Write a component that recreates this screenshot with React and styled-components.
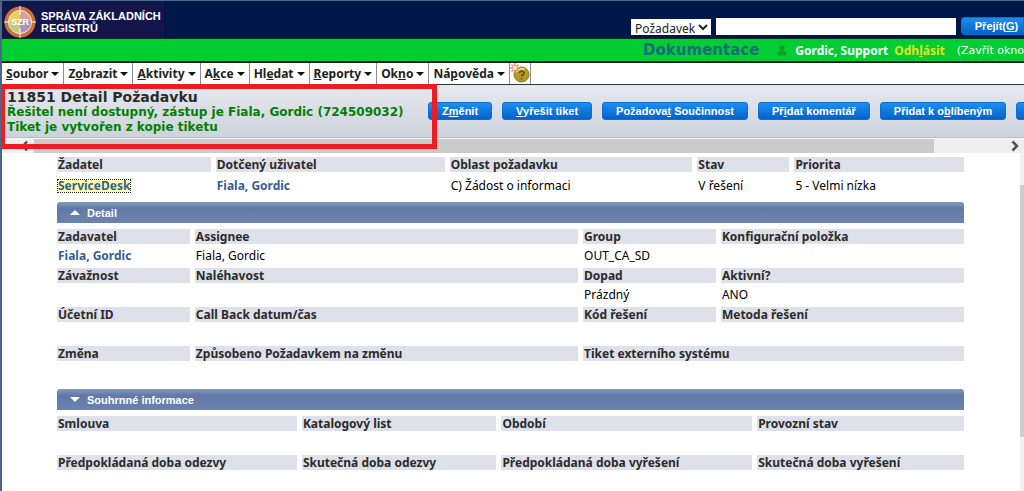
import React from 'react';
import styled, { createGlobalStyle, css } from 'styled-components';

const verdana = "'DejaVu Sans', Verdana, sans-serif";
const arial = "'Liberation Sans', Arial, sans-serif";
const tahoma = "'Noto Sans', Tahoma, sans-serif";

const GlobalStyle = createGlobalStyle`
  *, *::before, *::after {
    box-sizing: border-box;
  }

  html, body {
    margin: 0;
    background: #fff;
  }

  body {
    font-family: ${tahoma};
    font-size: 12px;
    color: #000;
    overflow: hidden;
  }
`;

const Page = styled.div`
  position: relative;
  min-height: 100vh;
  display: flex;
  flex-direction: column;
  border-left: 2px solid #4c6782;
  overflow: hidden;
`;

const TopBar = styled.header`
  display: flex;
  justify-content: space-between;
  height: 38px;
  border-top: 1px solid #4a6a92;
  background: #00174a;
`;

const Brand = styled.div`
  display: flex;
  align-items: center;
  gap: 5px;
  width: 162px;
  padding: 5px 0 0 2px;
  background: #14154a;
  color: #fff;
  font: bold 11px/12px ${arial};
  white-space: nowrap;
`;

const SearchForm = styled.form`
  display: flex;
  align-items: flex-end;
  gap: 5px;
  padding-bottom: 3px;
`;

const TypeSelect = styled.select`
  width: 80px;
  height: 16px;
  padding: 0;
  border: 0;
  background: #fff;
  color: #222;
  font: 12px ${tahoma};
`;

const SearchInput = styled.input`
  width: 240px;
  height: 17px;
  padding: 0 4px;
  border: 0;
  background: #fff;
  font: 12px ${tahoma};
`;

const BlueButton = styled.button`
  flex: none;
  min-width: 36px;
  height: 18px;
  padding: 0 13px;
  border: 1px solid #0a6fd0;
  border-radius: 3px;
  background: linear-gradient(#1c8ef0, #0562c8);
  color: #fff;
  font: bold 11px/14px ${arial};
  white-space: nowrap;
`;

const GoButton = styled(BlueButton)`
  width: 63px;
  padding: 0 4px 0 12px;
  border-radius: 3px 0 0 3px;
`;

const UserBar = styled.div`
  display: flex;
  align-items: center;
  justify-content: flex-end;
  height: 25px;
  border-top: 1px solid #04351c;
  border-bottom: 2px solid #06201c;
  background: #00ce33;
  color: #fff;
  font-weight: bold;
  white-space: nowrap;
`;

const DocsLink = styled.a`
  margin-right: 18px;
  color: #1c6c78;
  font-family: ${verdana};
  font-size: 15px;
  line-height: 20px;
  text-decoration: none;
`;

const UserName = styled.span`
  margin: 0 6px 0 8px;
`;

const LogoutLink = styled.a`
  color: #e8e020;
  text-decoration: none;
`;

const CloseLink = styled.a`
  margin-left: 12px;
  color: #fff;
  font-family: ${verdana};
  font-size: 11px;
  font-weight: normal;
  text-decoration: none;
`;

const MenuBar = styled.nav`
  display: flex;
  height: 22px;
  border-bottom: 1px solid #34343c;
  background: #fff;
`;

const MenuButton = styled.button`
  display: flex;
  align-items: center;
  justify-content: space-between;
  gap: 3px;
  padding: 0 4px;
  border: 0;
  border-right: 1px solid #8c8c94;
  background: #fff;
  color: #222;
  font: bold 12px ${tahoma};
  white-space: nowrap;

  &::after {
    content: '';
    border: 4px solid transparent;
    border-top-color: #111;
    border-bottom: 0;
  }
`;

const HelpButton = styled.button`
  width: 21px;
  padding: 0;
  border: 0;
  border-right: 1px solid #8c8c94;
  background: #fff;
`;

const TitleBar = styled.section`
  display: flex;
  height: 53px;
  border-bottom: 1px solid #b9bfca;
  background: linear-gradient(#e7e9ef, #cdd2dc);
  white-space: nowrap;
`;

const Titles = styled.div`
  flex: none;
  width: 426px;
  padding: 4px 0 0 5px;
  color: #008000;
  font-family: ${verdana};
  font-size: 12px;
  font-weight: bold;
  line-height: 15px;
`;

const Title = styled.h1`
  margin: 0;
  color: #2b2b2b;
  font-size: 14px;
  line-height: 16px;
`;

const Actions = styled.div`
  display: flex;
  gap: 10px;
  padding-top: 17px;
`;

const HorizontalScroll = styled.div`
  display: flex;
  align-items: center;
  height: 15px;
  padding: 0 4px 0 18px;
  border-top: 1px solid #f4f4f4;
  background: #efefef;
`;

const HorizontalThumb = styled.div`
  width: 90%;
  height: 14px;
  margin: 0 auto 0 4px;
  background: #cbcbcb;
`;

const Workspace = styled.div`
  flex: 1;
  display: flex;
  justify-content: space-between;
`;

const Content = styled.main`
  flex: 1;
  padding: 4px 56px 0 55px;
`;

const VerticalScroll = styled.div`
  width: 4px;
  padding-top: 32px;
  background: #f1f1f1;
`;

const VerticalThumb = styled.div`
  height: 252px;
  background: #cdcdcd;
`;

const FieldTable = styled.table`
  width: 100%;
  table-layout: fixed;
  border-collapse: collapse;
  line-height: 15px;
`;

const cell = css`
  padding: 0 5px 0 0;
  text-align: left;
  text-indent: 1px;
  white-space: nowrap;

  &:last-child {
    padding-right: 0;
  }
`;

const FieldLabel = styled.th`
  ${cell}
  width: ${({ $width }) => $width}%;
  height: 15px;
  background: #dee1e9 content-box;
  color: #2b2b2b;
`;

const FieldValue = styled.td`
  ${cell}
  height: ${({ $tall }) => ($tall ? 30 : 24)}px;
  padding-bottom: ${({ $tall }) => ($tall ? 4 : 2)}px;
`;

const PersonLink = styled.a`
  color: #33608f;
  font-weight: bold;
  text-decoration: none;

  ${({ $focused }) =>
    $focused &&
    css`
      display: inline-block;
      line-height: 12px;
      text-indent: 0;
      background: #ffffb0;
      outline: 1px dotted #222;
    `}
`;

const SectionBar = styled.button`
  display: flex;
  align-items: center;
  gap: 7px;
  width: 100%;
  height: 21px;
  margin-top: ${({ $spaced }) => ($spaced ? 4 : 0)}px;
  margin-bottom: 6px;
  padding: 0 13px;
  border: 0;
  border-radius: 3px 3px 0 0;
  background: linear-gradient(#8799ba, #5f79a8 30%, #6c83ad);
  color: #fff;
  font: bold 11px ${arial};

  &::before {
    content: '';
    border: 5px solid transparent;
    ${({ $open }) =>
      $open
        ? css`
            border-top: 0;
            border-bottom-color: #fff;
          `
        : css`
            border-bottom: 0;
            border-top-color: #fff;
          `}
  }
`;

const Highlight = styled.div`
  position: absolute;
  top: 84px;
  left: -2px;
  width: 437px;
  height: 65px;
  border: 5px solid #ed1c24;
  pointer-events: none;
`;

const menu = [
  ['', 'S', 'oubor'],
  ['Z', 'o', 'brazit'],
  ['', 'A', 'ktivity'],
  ['A', 'k', 'ce'],
  ['Hl', 'e', 'dat'],
  ['', 'R', 'eporty'],
  ['Ok', 'n', 'o'],
  ['Ná', 'p', 'ověda'],
];

const actions = [
  ['Z', 'm', 'ěnit'],
  ['', 'V', 'yřešit tiket'],
  ['Požadova', 't', ' Součinnost'],
  ['Př', 'i', 'dat komentář'],
  ['Přidat k o', 'b', 'líbeným'],
];

const summary = {
  widths: [17.5, 25.8, 27.3, 10.7, 18.7],
  rows: [
    {
      labels: ['Žadatel', 'Dotčený uživatel', 'Oblast požadavku', 'Stav', 'Priorita'],
      values: [
        <PersonLink href="#servicedesk" $focused>
          ServiceDesk
        </PersonLink>,
        <PersonLink href="#fiala">Fiala, Gordic</PersonLink>,
        'C) Žádost o informaci',
        'V řešení',
        '5 - Velmi nízka',
      ],
    },
  ],
};

const detail = {
  widths: [15.2, 42.8, 15.2, 26.8],
  rows: [
    {
      labels: ['Zadavatel', 'Assignee', 'Group', 'Konfigurační položka'],
      values: [
        <PersonLink href="#fiala">Fiala, Gordic</PersonLink>,
        'Fiala, Gordic',
        'OUT_CA_SD',
        '',
      ],
    },
    {
      labels: ['Závažnost', 'Naléhavost', 'Dopad', 'Aktivní?'],
      values: ['', '', 'Prázdný', 'ANO'],
    },
    {
      labels: ['Účetní ID', 'Call Back datum/čas', 'Kód řešení', 'Metoda řešení'],
      values: ['', '', '', ''],
    },
    {
      labels: ['Změna', 'Způsobeno Požadavkem na změnu', 'Tiket externího systému'],
      values: ['', '', '', ''],
    },
  ],
};

const info = {
  widths: [27, 22, 28.2, 22.8],
  rows: [
    {
      labels: ['Smlouva', 'Katalogový list', 'Období', 'Provozní stav'],
      values: ['', '', '', ''],
    },
    {
      labels: [
        'Předpokládaná doba odezvy',
        'Skutečná doba odezvy',
        'Předpokládaná doba vyřešení',
        'Skutečná doba vyřešení',
      ],
      values: ['', '', '', ''],
    },
  ],
};

const AccessText = ({ parts }) => (
  <span>
    {parts[0]}
    <u>{parts[1]}</u>
    {parts[2]}
  </span>
);

// the last label of a short row stretches over the remaining columns
const Fields = ({ data, tall }) => (
  <FieldTable>
    <tbody>
      {data.rows.map(({ labels, values }) => (
        <React.Fragment key={labels[0]}>
          <tr>
            {labels.map((label, i) => (
              <FieldLabel
                key={label}
                $width={data.widths[i]}
                colSpan={i === labels.length - 1 ? data.widths.length - i : 1}
              >
                {label}
              </FieldLabel>
            ))}
          </tr>
          <tr>
            {values.map((value, i) => (
              <FieldValue key={i} $tall={tall}>
                {value}
              </FieldValue>
            ))}
          </tr>
        </React.Fragment>
      ))}
    </tbody>
  </FieldTable>
);

const Logo = () => (
  <svg width="32" height="32" viewBox="0 0 32 32" aria-hidden="true">
    <circle cx="16" cy="16" r="13.5" fill="#e8d890" stroke="#c8733c" strokeWidth="4" />
    <path d="M16 16V4.500A11.500 11.500 0 0 0 4.500 16z" fill="#e6d060" />
    <path d="M16 16V4.500A11.500 11.500 0 0 1 27.500 16z" fill="#d8a098" />
    <path d="M16 16V27.500A11.500 11.500 0 0 1 4.500 16z" fill="#c0cc78" />
    <path d="M16 16V27.500A11.500 11.500 0 0 0 27.500 16z" fill="#b090c0" />
    <circle cx="16" cy="16" r="11.500" fill="none" stroke="#f4e4d0" />
    <path d="M16 0v9M16 22v10M0 16h5M27 16h5" stroke="#fff" />
    <text x="16" y="19" fill="#fff" fontFamily="Liberation Sans" fontSize="9" fontWeight="bold" textAnchor="middle">
      SZR
    </text>
  </svg>
);

const UserIcon = () => (
  <svg width="10" height="11" viewBox="0 0 10 11" aria-hidden="true">
    <circle cx="5" cy="3" r="2.500" fill="#10a022" />
    <path d="M0.500 10.500C0.500 7 2 5.500 5 5.500s4.500 1.500 4.500 5z" fill="#10a022" />
  </svg>
);

const HelpIcon = () => (
  <svg width="20" height="20" viewBox="0 0 20 20" aria-hidden="true">
    <circle cx="11.500" cy="11.500" r="7.500" fill="#b09a28" stroke="#8a7618" />
    <path d="M6.500 9a6 6 0 0 1 8-2.500" fill="none" stroke="#e6da80" strokeWidth="2" />
    <path d="M9.500 10c0-2.500 4.500-2.500 4.500 0 0 2-2.500 1.500-2.500 3.500M11.500 15v1.500" fill="none" stroke="#5c4e0c" strokeWidth="1.500" />
    <path d="M5 0v10M0 5h10M1.500 1.500l7 7M8.500 1.500l-7 7" stroke="#e88a68" strokeWidth="1.500" />
    <circle cx="5" cy="5" r="2" fill="#fff0d0" />
  </svg>
);

const Chevron = ({ left }) => (
  <svg width="10" height="12" viewBox="0 0 10 12" aria-hidden="true">
    <path d={left ? 'M7 1.500L3 6l4 4.500' : 'M2.500 1.500L7 6l-4.500 4.500'} fill="none" stroke="#505050" strokeWidth="2.500" />
  </svg>
);

const App = () => (
  <Page>
    <GlobalStyle />
    <TopBar>
      <Brand>
        <Logo />
        <span>
          SPRÁVA ZÁKLADNÍCH
          <br />
          REGISTRŮ
        </span>
      </Brand>
      <SearchForm>
        <TypeSelect aria-label="Typ">
          <option>Požadavek</option>
        </TypeSelect>
        <SearchInput type="text" aria-label="Hledat" />
        <GoButton type="button">
          <AccessText parts={['Přejít(', 'G', ')']} />
        </GoButton>
      </SearchForm>
    </TopBar>
    <UserBar>
      <DocsLink href="#dokumentace">Dokumentace</DocsLink>
      <UserIcon />
      <UserName>Gordic, Support</UserName>
      <LogoutLink href="#odhlasit">
        <AccessText parts={['Odh', 'l', 'ásit']} />
      </LogoutLink>
      <CloseLink href="#zavrit">(Zavřít okno</CloseLink>
    </UserBar>
    <MenuBar>
      {menu.map(parts => (
        <MenuButton key={parts.join('')} type="button">
          <AccessText parts={parts} />
        </MenuButton>
      ))}
      <HelpButton type="button" aria-label="Nápověda">
        <HelpIcon />
      </HelpButton>
    </MenuBar>
    <TitleBar>
      <Titles>
        <Title>11851 Detail Požadavku</Title>
        <div>Řešitel není dostupný, zástup je Fiala, Gordic (724509032)</div>
        <div>Tiket je vytvořen z kopie tiketu</div>
      </Titles>
      <Actions>
        {actions.map(parts => (
          <BlueButton key={parts.join('')} type="button">
            <AccessText parts={parts} />
          </BlueButton>
        ))}
        <BlueButton type="button" aria-label="Další" />
      </Actions>
    </TitleBar>
    <HorizontalScroll>
      <Chevron left />
      <HorizontalThumb />
      <Chevron />
    </HorizontalScroll>
    <Workspace>
      <Content>
        <Fields data={summary} tall />
        <SectionBar type="button" $open>
          Detail
        </SectionBar>
        <Fields data={detail} />
        <SectionBar type="button" $spaced>
          Souhrnné informace
        </SectionBar>
        <Fields data={info} />
      </Content>
      <VerticalScroll>
        <VerticalThumb />
      </VerticalScroll>
    </Workspace>
    <Highlight />
  </Page>
);

export default App;
